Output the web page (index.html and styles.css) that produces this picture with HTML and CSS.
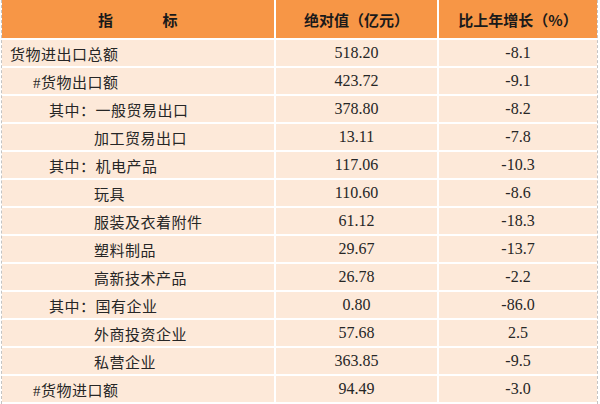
FILE: index.html
```html
<!DOCTYPE html>
<html lang="zh">
<head>
<meta charset="utf-8">
<link rel="stylesheet" href="styles.css">
</head>
<body>
<div class="sheet">
  <div class="row head">
    <div class="cell name center"><span>指</span><span class="sp"></span><span>标</span></div>
    <div class="cell center">绝对值（亿元）</div>
    <div class="cell center">比上年增长（%）</div>
  </div>
  <div class="row"><div class="cell name l0">货物进出口总额</div><div class="cell num">518.20</div><div class="cell num">-8.1</div></div>
  <div class="row"><div class="cell name l1">#货物出口额</div><div class="cell num">423.72</div><div class="cell num">-9.1</div></div>
  <div class="row"><div class="cell name l2">其中：一般贸易出口</div><div class="cell num">378.80</div><div class="cell num">-8.2</div></div>
  <div class="row"><div class="cell name l3">加工贸易出口</div><div class="cell num">13.11</div><div class="cell num">-7.8</div></div>
  <div class="row"><div class="cell name l2">其中：机电产品</div><div class="cell num">117.06</div><div class="cell num">-10.3</div></div>
  <div class="row"><div class="cell name l3">玩具</div><div class="cell num">110.60</div><div class="cell num">-8.6</div></div>
  <div class="row"><div class="cell name l3">服装及衣着附件</div><div class="cell num">61.12</div><div class="cell num">-18.3</div></div>
  <div class="row"><div class="cell name l3">塑料制品</div><div class="cell num">29.67</div><div class="cell num">-13.7</div></div>
  <div class="row"><div class="cell name l3">高新技术产品</div><div class="cell num">26.78</div><div class="cell num">-2.2</div></div>
  <div class="row"><div class="cell name l2">其中：国有企业</div><div class="cell num">0.80</div><div class="cell num">-86.0</div></div>
  <div class="row"><div class="cell name l3">外商投资企业</div><div class="cell num">57.68</div><div class="cell num">2.5</div></div>
  <div class="row"><div class="cell name l3">私营企业</div><div class="cell num">363.85</div><div class="cell num">-9.5</div></div>
  <div class="row"><div class="cell name l1">#货物进口额</div><div class="cell num">94.49</div><div class="cell num">-3.0</div></div>
</div>
</body>
</html>
```
FILE: styles.css
```css
html, body {
  margin: 0;
  padding: 0;
  background: #ffffff;
}
body {
  width: 600px;
  height: 404px;
  overflow: hidden;
  font-family: "Liberation Serif", "Noto Sans CJK SC", serif;
  color: #262626;
}
.sheet {
  margin-left: 1px;
  width: 597px;
  border-left: 1px dashed #c4c4c4;
  border-right: 1px dashed #c4c4c4;
  box-sizing: border-box;
  display: flex;
  flex-direction: column;
  gap: 2px;
  height: 404px;
}
.row {
  display: grid;
  grid-template-columns: 272px 161px 158px;
  column-gap: 2px;
  height: 26px;
  flex: none;
}
.row.head {
  height: 38px;
}
.cell {
  background: #fde9d9;
  display: flex;
  align-items: center;
  font-size: 16px;
  white-space: nowrap;
}
.head .cell {
  background: #f79646;
  font-family: "Noto Sans CJK SC", sans-serif;
  font-weight: bold;
  font-size: 15px;
  color: #1a1a1a;
  justify-content: center;
}
.sp {
  display: inline-block;
  width: 49px;
}
.name {
  font-family: "Liberation Serif", "Noto Sans CJK SC", serif;
  font-size: 15px;
  letter-spacing: 0.5px;
}
.l0 { padding-left: 8px; }
.l1 { padding-left: 31px; }
.l2 { padding-left: 47px; }
.l3 { padding-left: 92px; }
.num {
  justify-content: center;
}
```
